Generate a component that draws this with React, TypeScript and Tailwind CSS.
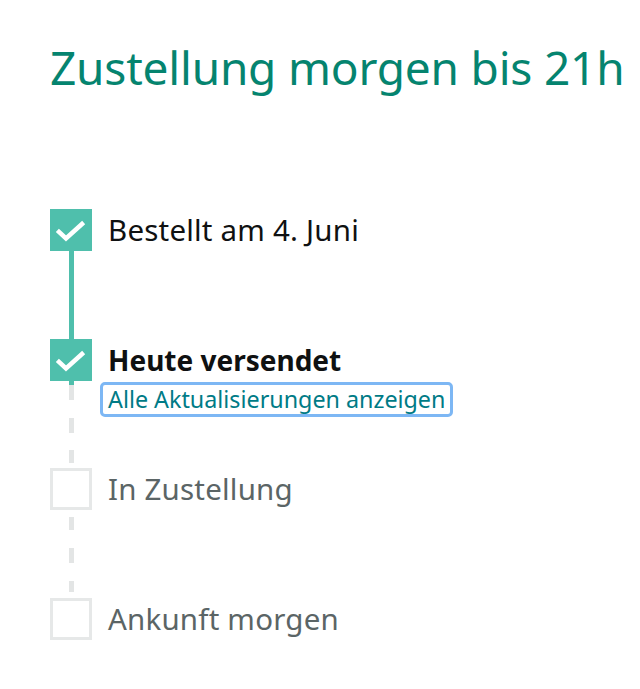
import React from "react";

const Check = () => (
  <svg width="42" height="42" viewBox="0 0 42 42">
    <path d="M9 23 L16 29.5 L32 15" fill="none" stroke="white" strokeWidth="4.5" strokeLinecap="square" strokeLinejoin="miter" />
  </svg>
);

const DoneBox = () => (
  <div className="w-[42px] h-[42px] bg-[#4fbfac] shrink-0 flex items-center justify-center">
    <Check />
  </div>
);

const EmptyBox = () => (
  <div className="w-[42px] h-[42px] border-[3px] border-[#e6e8e8] bg-white shrink-0" />
);

const Dash = ({ h, mt }: { h: string; mt: string }) => (
  <div className={`w-[5px] bg-[#e3e5e5] ${h} ${mt}`} />
);

export default function App() {
  return (
    <div
      className="w-[640px] h-[689px] bg-white overflow-hidden"
      style={{ fontFamily: '"Noto Sans", "Open Sans", sans-serif' }}
    >
      <h1 className="pl-[50px] pt-[37px] text-[46px] leading-[60px] text-[#05846f] tracking-[-0.2px] whitespace-nowrap">
        Zustellung morgen bis 21h
      </h1>

      <div className="pl-[50px] pt-[112px] flex flex-col">
        {/* Row 1 */}
        <div className="flex h-[130px]">
          <div className="w-[42px] flex flex-col items-center">
            <DoneBox />
            <div className="w-[5px] flex-1 bg-[#4fbfac]" />
          </div>
          <div className="pl-[16px] pt-[1px] text-[29.5px] leading-[40px] text-[#0f1111] tracking-[0.2px] whitespace-nowrap">
            Bestellt am 4. Juni
          </div>
        </div>

        {/* Row 2 */}
        <div className="flex h-[129px]">
          <div className="w-[42px] flex flex-col items-center">
            <DoneBox />
            <div className="w-[5px] h-[4px] bg-[#4fbfac]" />
            <Dash h="h-[15px]" mt="mt-0" />
            <Dash h="h-[15px]" mt="mt-[18px]" />
            <Dash h="h-[13px]" mt="mt-[17px]" />
          </div>
          <div className="flex flex-col items-start">
            <div className="pl-[16px] pt-[1px] text-[28px] leading-[40px] font-bold text-[#0f1111] whitespace-nowrap">
              Heute versendet
            </div>
            <div className="ml-[8px] mt-[2px] border-[3px] border-[#7db7f4] rounded-[5px] px-[5px] py-0">
              <span className="block text-[23.3px] leading-[29px] text-[#007b86] whitespace-nowrap">
                Alle Aktualisierungen anzeigen
              </span>
            </div>
          </div>
        </div>

        {/* Row 3 */}
        <div className="flex h-[130px]">
          <div className="w-[42px] flex flex-col items-center">
            <EmptyBox />
            <Dash h="h-[13px]" mt="mt-[7px]" />
            <Dash h="h-[15px]" mt="mt-[18px]" />
            <Dash h="h-[11px]" mt="mt-[18px]" />
          </div>
          <div className="pl-[16px] pt-[1px] text-[29.5px] leading-[40px] text-[#5b6566] tracking-[0.2px] whitespace-nowrap">
            In Zustellung
          </div>
        </div>

        {/* Row 4 */}
        <div className="flex">
          <div className="w-[42px] flex flex-col items-center">
            <EmptyBox />
          </div>
          <div className="pl-[16px] pt-[1px] text-[29.5px] leading-[40px] text-[#5b6566] tracking-[0.2px] whitespace-nowrap">
            Ankunft morgen
          </div>
        </div>
      </div>
    </div>
  );
}
